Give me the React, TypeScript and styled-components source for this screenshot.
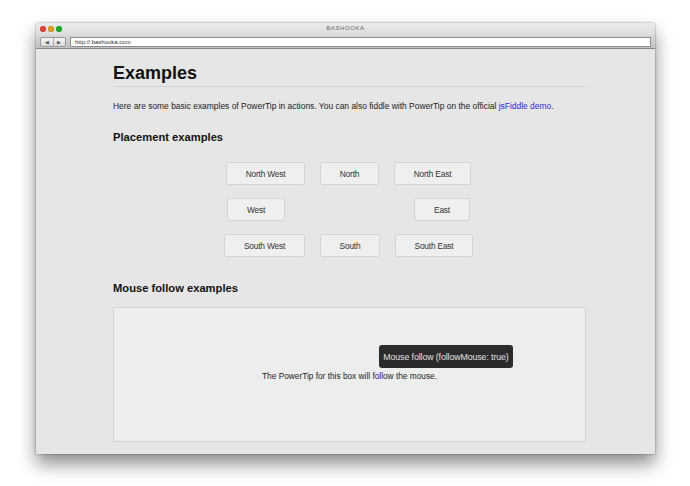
import React from "react";
import styled, { createGlobalStyle } from "styled-components";

const Global = createGlobalStyle`
  html, body { margin: 0; padding: 0; background: #ffffff; }
  body { font-family: "Liberation Sans", Arial, sans-serif; }
`;

const Stage = styled.div`
  width: 690px;
  height: 486px;
  padding-top: 23px;
  padding-left: 36px;
  box-sizing: border-box;
`;

const Window = styled.div`
  width: 619px;
  height: 431px;
  display: flex;
  flex-direction: column;
  background: #e6e6e6;
  box-shadow: 0 10px 18px rgba(0, 0, 0, 0.45), 0 0 2px rgba(0, 0, 0, 0.5);
  border-radius: 3px 3px 0 0;
  overflow: hidden;
`;

const TitleBar = styled.div`
  height: 12px;
  position: relative;
  display: flex;
  align-items: center;
  padding-left: 4px;
  gap: 2px;
  background: linear-gradient(#ececec, #dcdcdc);
`;

const Light = styled.span<{ $c: string }>`
  width: 6px;
  height: 6px;
  border-radius: 50%;
  background: ${(p) => p.$c};
  box-shadow: inset 0 0 1px rgba(0, 0, 0, 0.5);
`;

const Title = styled.div`
  position: absolute;
  left: 0;
  right: 0;
  top: 2px;
  text-align: center;
  font-size: 6px;
  letter-spacing: 0.6px;
  color: #666;
`;

const ToolBar = styled.div`
  height: 13px;
  display: flex;
  align-items: center;
  padding: 0 4px;
  gap: 4px;
  background: linear-gradient(#d8d8d8, #c2c2c2);
  border-bottom: 1px solid #8a8a8a;
`;

const NavGroup = styled.div`
  display: flex;
  width: 24px;
  height: 8px;
  border: 1px solid #9a9a9a;
  border-radius: 2px;
  background: linear-gradient(#f4f4f4, #d8d8d8);
`;

const NavBtn = styled.span`
  flex: 1;
  display: flex;
  align-items: center;
  justify-content: center;
  font-size: 5px;
  color: #555;
  & + & { border-left: 1px solid #aaa; }
`;

const Address = styled.div`
  flex: 1;
  height: 8px;
  background: #fff;
  border: 1px solid #8c8c8c;
  font-size: 6px;
  line-height: 8px;
  padding-left: 4px;
  color: #333;
`;

const Content = styled.div`
  flex: 1;
  padding: 12px 69px 0 77px;
  display: flex;
  flex-direction: column;
`;

const H1 = styled.h1`
  margin: 0;
  font-size: 18px;
  line-height: 24px;
  font-weight: bold;
  color: #111;
  padding-bottom: 1px;
  border-bottom: 1px solid #d2d2d2;
`;

const Para = styled.p`
  margin: 13px 0 0;
  font-size: 8.45px;
  line-height: 12px;
  color: #222;
  a { color: #2a2ad8; text-decoration: none; }
`;

const H2 = styled.h2`
  margin: 0;
  font-size: 11.2px;
  line-height: 14px;
  font-weight: bold;
  color: #111;
`;

const PlacementTitle = styled(H2)`
  margin-top: 18px;
`;

const Grid = styled.div`
  margin-top: 18px;
  display: flex;
  flex-direction: column;
  gap: 13px;
`;

const Row = styled.div<{ $gap: number }>`
  display: flex;
  justify-content: center;
  gap: ${(p) => p.$gap}px;
  padding-right: 2px;
`;

const Btn = styled.div<{ $w: number }>`
  width: ${(p) => p.$w}px;
  height: 23px;
  box-sizing: border-box;
  display: flex;
  align-items: center;
  justify-content: center;
  background: #efefef;
  border: 1px solid #d4d4d4;
  border-radius: 2px;
  font-size: 8.4px;
  color: #333;
  letter-spacing: -0.2px;
`;

const MouseTitle = styled(H2)`
  margin-top: 24px;
`;

const FollowBox = styled.div`
  margin-top: 12px;
  height: 135px;
  position: relative;
  box-sizing: border-box;
  background: #ededed;
  border: 1px solid #d2d2d2;
  border-radius: 2px;
  display: flex;
  align-items: center;
  justify-content: center;
  padding-top: 2px;
  font-size: 8.3px;
  color: #222;
`;

const Tip = styled.div`
  position: absolute;
  left: 265px;
  top: 37px;
  width: 134px;
  height: 23px;
  box-sizing: border-box;
  border-radius: 3px;
  background: #2b2b2b;
  color: #e2e2e2;
  font-size: 8.8px;
  display: flex;
  align-items: center;
  justify-content: center;
  letter-spacing: -0.1px;
`;

export default function App() {
  return (
    <>
      <Global />
      <Stage>
        <Window>
          <TitleBar>
            <Light $c="#e0443e" />
            <Light $c="#dea123" />
            <Light $c="#1aab29" />
            <Title>BASHOOKA</Title>
          </TitleBar>
          <ToolBar>
            <NavGroup>
              <NavBtn>◀</NavBtn>
              <NavBtn>▶</NavBtn>
            </NavGroup>
            <Address>http://.bashooka.com</Address>
          </ToolBar>
          <Content>
            <H1>Examples</H1>
            <Para>
              Here are some basic examples of PowerTip in actions. You can also fiddle with PowerTip on the official{" "}
              <a href="#">jsFiddle demo</a>.
            </Para>
            <PlacementTitle>Placement examples</PlacementTitle>
            <Grid>
              <Row $gap={15}>
                <Btn $w={79}>North West</Btn>
                <Btn $w={59}>North</Btn>
                <Btn $w={77}>North East</Btn>
              </Row>
              <Row $gap={129}>
                <Btn $w={58}>West</Btn>
                <Btn $w={56}>East</Btn>
              </Row>
              <Row $gap={15}>
                <Btn $w={81}>South West</Btn>
                <Btn $w={60}>South</Btn>
                <Btn $w={78}>South East</Btn>
              </Row>
            </Grid>
            <MouseTitle>Mouse follow examples</MouseTitle>
            <FollowBox>
              The PowerTip for this box will follow the mouse.
              <Tip>Mouse follow (followMouse: true)</Tip>
            </FollowBox>
          </Content>
        </Window>
      </Stage>
    </>
  );
}
